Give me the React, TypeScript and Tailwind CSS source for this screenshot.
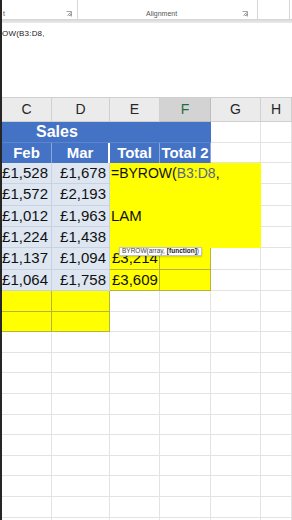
import React from "react";

const font = { fontFamily: '"Liberation Sans", Arial, sans-serif' };

function Launcher() {
  return (
    <svg width="6" height="6" viewBox="0 0 6 6" className="text-[#8a8a8a]">
      <path d="M0.5 0.5h5v5" fill="none" stroke="currentColor" strokeWidth="0.8" />
      <path d="M1.5 4.5l3-3M2.5 4.5h2v-2" fill="none" stroke="currentColor" strokeWidth="0.8" />
    </svg>
  );
}

const grid = "border-r border-b border-[#e3e3e3]";
const blueData = "bg-[#dde6f1] border-r border-b border-[#c9d3df] flex items-center justify-end pr-[3px]";
const yellowCell = "bg-[#ffff00] border-r border-b border-[#b4b43c]";

const rows: [string, string, string][] = [
  ["£1,528", "£1,678", ""],
  ["£1,572", "£2,193", ""],
  ["£1,012", "£1,963", ""],
  ["£1,224", "£1,438", ""],
  ["£1,137", "£1,094", "£3,214"],
  ["£1,064", "£1,758", "£3,609"],
];

export default function App() {
  return (
    <div className="flex h-[520px] w-[292px] flex-col overflow-hidden border-l-2 border-[#262626] bg-white text-[#111]" style={font}>
      {/* ribbon */}
      <div className="flex h-[19px] shrink-0 items-end text-[7px] leading-none text-[#555]">
        <div className="flex h-full w-[76px] items-end justify-between border-r border-[#d6d6d6] pb-[2px] pl-[1px] pr-[5px]">
          <span>t</span>
          <Launcher />
        </div>
        <div className="flex h-full w-[180px] items-end justify-between border-r border-[#d6d6d6] pb-[2px] pr-[9px]">
          <span className="pl-[68px]">Alignment</span>
          <Launcher />
        </div>
        <div className="h-full w-[32px] border-r border-[#d6d6d6]" />
      </div>
      <div className="h-[4px] shrink-0 bg-[linear-gradient(#d4d4d4,#ececec)]" />

      {/* formula bar */}
      <div className="h-[75px] shrink-0 border-b border-[#cfcfcf] pt-[5px] text-[8px] tracking-[0.2px] text-[#222]">
        OW(B3:D8,
      </div>

      {/* sheet */}
      <div className="relative grid shrink-0 grid-cols-[50px_58px_50px_51px_50px_1fr] grid-rows-[24px_21px_20px_repeat(6,21.33px)_repeat(12,20.6px)]">
        {["C", "D", "E", "F", "G", "H"].map((c) => (
          <div
            key={c}
            className={
              c === "F"
                ? "flex items-center justify-center border-r border-b border-[#bdbdbd] bg-[#d3d3d3] text-[14px] text-[#1f6b3f]"
                : "flex items-center justify-center border-r border-b border-[#d0d0d0] bg-[#ebebeb] text-[14px] text-[#262626]"
            }
          >
            {c}
          </div>
        ))}

        {/* Sales */}
        <div className="col-span-4 flex items-center border-b border-[#5b85cf] bg-[#4472c4] pl-[34px] text-[16px] font-bold text-white">
          Sales
        </div>
        <div className={grid} />
        <div className={grid} />

        {/* titles */}
        {["Feb", "Mar", "Total", "Total 2"].map((t, i) => (
          <div
            key={t}
            className={
              "flex items-center justify-center bg-[#4472c4] text-[15px] font-bold text-white " +
              (i === 1 ? "border-r-2 border-white" : "border-r border-[#8aa6db]")
            }
          >
            {t}
          </div>
        ))}
        <div className={grid} />
        <div className={grid} />

        {/* edit block E3:G6 */}
        <div className="col-start-3 col-span-3 row-start-4 row-span-4 grid grid-rows-4 bg-[#ffff00] pl-[1px] text-[14px]">
          <div className="flex items-center whitespace-nowrap">
            =BYROW(<span className="text-[#55678a]">B3:D8</span>,
          </div>
          <div />
          <div className="flex items-center text-[15px]">LAM</div>
          <div />
        </div>

        {rows.map(([c, d, e], i) => (
          <React.Fragment key={c}>
            <div className={blueData + " text-[15px]"}>{c}</div>
            <div className={blueData + " text-[15px]"}>{d}</div>
            {i >= 4 && (
              <>
                <div className={yellowCell + " flex items-center pl-[2px] text-[15px]"}>{e}</div>
                <div className={yellowCell} />
                <div className={grid} />
              </>
            )}
            <div className={grid} />
          </React.Fragment>
        ))}

        {[0, 1].map((r) => (
          <React.Fragment key={"y" + r}>
            <div className={yellowCell} />
            <div className={yellowCell} />
            <div className={grid} />
            <div className={grid} />
            <div className={grid} />
            <div className={grid} />
          </React.Fragment>
        ))}

        {Array.from({ length: 60 }).map((_, i) => (
          <div key={"e" + i} className={grid} />
        ))}

        {/* tooltip */}
        <div className="absolute left-[117px] top-[149px] flex h-[9px] items-center border border-[#c4c4c4] bg-white px-[2px] text-[6.5px] leading-none text-[#444] shadow-[0_1px_2px_rgba(0,0,0,0.2)]">
          BYROW(array, <span className="ml-[2px] font-bold text-[#222]">[function]</span>)
        </div>
      </div>
    </div>
  );
}
